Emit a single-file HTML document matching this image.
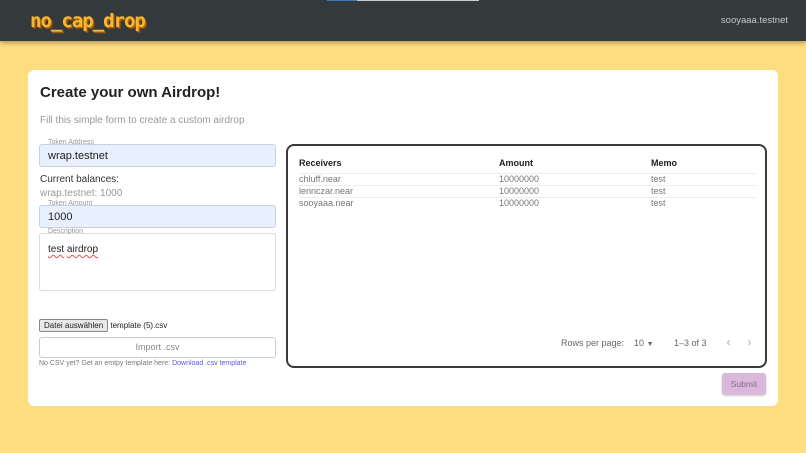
<!DOCTYPE html>
<html><head><meta charset="utf-8"><style>
*{box-sizing:border-box;margin:0;padding:0}
body{width:806px;height:453px;background:#fedc80;font-family:"Liberation Sans",sans-serif;position:relative;overflow:hidden}
.hdr{position:absolute;left:0;top:0;width:806px;height:41px;background:#343a3c;box-shadow:0 2px 4px rgba(0,0,0,.3)}
.logo{position:absolute;left:30px;top:10px;font-family:"DejaVu Sans Mono",monospace;font-weight:bold;font-size:19px;color:#f8b733;text-shadow:1px 1px 0 #b86a10,2px 2px 0 #7a4a10;letter-spacing:-1px}
.prog{position:absolute;left:327px;top:0;width:152px;height:1px;background:#ccc}
.prog i{position:absolute;left:0;top:0;width:30px;height:1px;background:#3a7ab8}
.user{position:absolute;right:18px;top:15px;font-size:9.5px;color:#c8c8c8}
.card{position:absolute;left:28px;top:70px;width:750px;height:336px;background:#fff;border-radius:6px}
h1{position:absolute;left:12px;top:14px;font-size:15px;font-weight:bold;color:#222}
.sub{position:absolute;left:12px;top:45px;font-size:10px;color:#999}
.fld{position:absolute;left:11px;width:237px;border:1px solid #c8d0e0;border-radius:3px;background:#e8effd}
.fld .lb{position:absolute;left:6px;top:-6px;font-size:7px;color:#999;background:linear-gradient(#fff 50%,transparent 50%);padding:0 2px}
.fld .v{position:absolute;left:8px;font-size:11px;color:#222}
.t{position:absolute;left:12px;font-size:10px}
.tbl{position:absolute;left:258px;top:74px;width:481px;height:224px;border:2px solid #3b3b3b;border-radius:8px}
.row{position:absolute;left:11px;width:458px;height:12px;font-size:9px;color:#777;border-bottom:1px solid #eee}
.row span{position:absolute;top:0}
.sp{text-decoration:underline wavy #d55;text-underline-offset:2px}
</style></head><body>
<div class="hdr"><div class="logo">no_cap_drop</div><div class="prog"><i></i></div><div class="user">sooyaaa.testnet</div></div>
<div class="card">
<h1>Create your own Airdrop!</h1>
<div class="sub">Fill this simple form to create a custom airdrop</div>
<div class="fld" style="top:74px;height:23px"><span class="lb">Token Address</span><span class="v" style="top:5px">wrap.testnet</span></div>
<div class="t" style="top:104px;color:#333">Current balances:</div>
<div class="t" style="top:118px;color:#999">wrap.testnet: 1000</div>
<div class="fld" style="top:135px;height:23px"><span class="lb">Token Amount</span><span class="v" style="top:5px">1000</span></div>
<div class="fld" style="top:163px;height:58px;background:#fff;border-color:#ddd"><span class="lb">Description</span><span class="v" style="top:10px;font-size:10px"><span class="sp">test</span> <span class="sp">airdrop</span></span></div>
<div style="position:absolute;left:11px;top:249px;font-size:8px;color:#222"><span style="display:inline-block;border:1px solid #888;background:#e9e9e9;padding:1px 4px;border-radius:2px">Datei auswählen</span> template (5).csv</div>
<div style="position:absolute;left:11px;top:267px;width:237px;height:21px;border:1px solid #ccc;border-radius:3px;text-align:center;font-size:9px;color:#888;line-height:19px">Import .csv</div>
<div style="position:absolute;left:11px;top:290px;font-size:7px;color:#777">No CSV yet? Get an emtpy template here: <span style="color:#5a5ae0">Download .csv template</span></div>
<div class="tbl">
<div class="row" style="top:12px;height:16px;color:#222;font-weight:bold"><span>Receivers</span><span style="left:200px">Amount</span><span style="left:352px">Memo</span></div>
<div class="row" style="top:28px"><span>chluff.near</span><span style="left:200px">10000000</span><span style="left:352px">test</span></div>
<div class="row" style="top:40px"><span>lennczar.near</span><span style="left:200px">10000000</span><span style="left:352px">test</span></div>
<div class="row" style="top:52px;border:none"><span>sooyaaa.near</span><span style="left:200px">10000000</span><span style="left:352px">test</span></div>
<div style="position:absolute;left:273px;top:189px;font-size:9px;color:#666;white-space:nowrap">Rows per page:&nbsp;&nbsp;&nbsp; 10 <span style="font-size:7px">▼</span> <span style="margin-left:18px">1–3 of 3</span><span style="margin-left:20px;color:#aaa;font-size:12px">‹</span><span style="margin-left:17px;color:#aaa;font-size:12px">›</span></div>
</div>
<div style="position:absolute;left:694px;top:303px;width:44px;height:22px;background:#d9b8dc;border-radius:3px;font-size:8.5px;color:#8a6a8e;text-align:center;line-height:22px;box-shadow:0 1px 2px rgba(0,0,0,.2)">Submit</div>
</div>
</body></html>
